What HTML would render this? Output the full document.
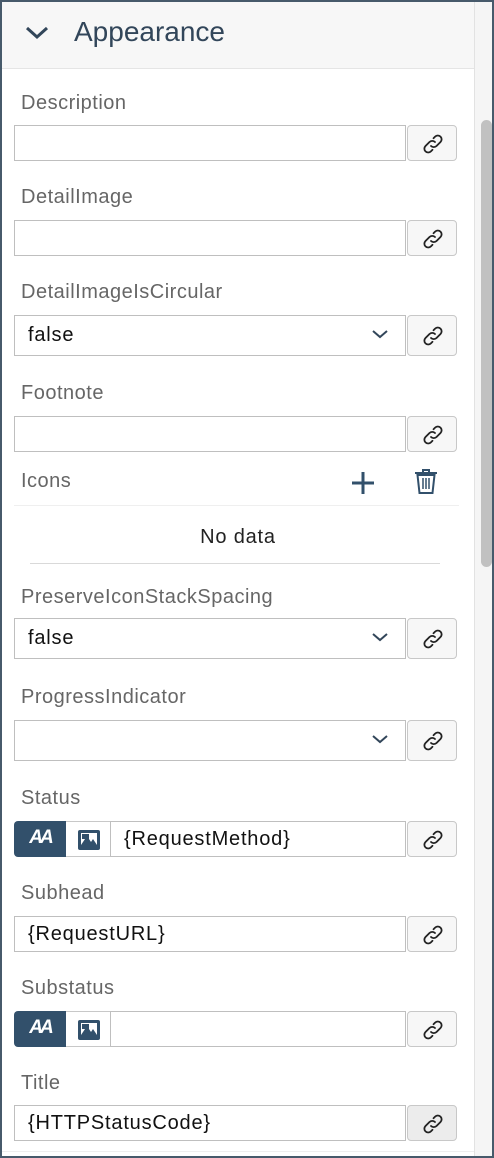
<!DOCTYPE html>
<html><head><meta charset="utf-8"><style>
*{box-sizing:border-box;margin:0;padding:0}
body{width:494px;height:1158px;background:#475a6b;position:relative;overflow:hidden;font-family:"Liberation Sans",sans-serif}
#p{position:absolute;left:2px;top:2px;width:490px;height:1154px;background:#fff;overflow:hidden}
.hdr{position:absolute;left:0;top:0;width:472px;height:67px;background:#f7f7f7;border-bottom:1px solid #e5e5e5}
.ht{position:absolute;left:72px;top:14px;font-size:28px;color:#32465a}
.sb{position:absolute;left:472px;top:0;width:18px;height:1154px;background:#f5f5f5;border-left:1px solid #e2e2e2}
.th{position:absolute;left:479px;top:118px;width:11px;height:447px;background:#c1c1c1;border-radius:6px}
.lb{position:absolute;left:19px;font-size:20px;letter-spacing:0.5px;color:#666}
.in{position:absolute;left:12px;width:392px;height:36px;border:1px solid #bfbfbf;background:#fff;font-size:20px;letter-spacing:0.8px;color:#111;padding:6px 0 0 13px}
.sel{height:41px;padding-top:8px}
.lk{position:absolute;left:405px;width:50px;height:36px;border:1px solid #c8c8c8;border-radius:4px;background:#f7f7f7}
.lk svg{position:absolute;left:13px;top:6px}
.chev{position:absolute;right:16px;top:12px}
.tg1{position:absolute;left:12px;width:52px;height:36px;background:#32506b;border-radius:4px 0 0 4px;color:#fff;font-size:19px;font-weight:bold;font-style:italic;text-align:center;padding-top:6px;letter-spacing:-3px}
.tg2{position:absolute;left:64px;width:45px;height:36px;border:1px solid #c8c8c8;border-left:none;background:#fff}
.tg2 svg{position:absolute;left:11px;top:7px}
.hl{position:absolute;height:1px;background:#e8e8e8}
</style></head><body><div id="p">
<div class="hdr"><svg style="position:absolute;left:22px;top:22px" width="26" height="18" viewBox="0 0 26 18"><path d="M3 4l10 9 10-9" fill="none" stroke="#32465a" stroke-width="3"/></svg><div class="ht">Appearance</div></div>
<div class="sb"></div><div class="th"></div>

<div class="lb" style="top:90px">Description</div>
<div class="in" style="top:123px"></div><div class="lk" style="top:123px"></div>

<div class="lb" style="top:184px">DetailImage</div>
<div class="in" style="top:218px"></div><div class="lk" style="top:218px"></div>

<div class="lb" style="top:279px">DetailImageIsCircular</div>
<div class="in sel" style="top:313px">false<svg class="chev" width="18" height="12" viewBox="0 0 18 12"><path d="M2 3l7 6 7-6" fill="none" stroke="#32465a" stroke-width="2"/></svg></div><div class="lk" style="top:313px;height:41px"></div>

<div class="lb" style="top:380px">Footnote</div>
<div class="in" style="top:414px"></div><div class="lk" style="top:414px"></div>

<div class="lb" style="top:468px">Icons</div>
<svg style="position:absolute;left:348px;top:468px" width="26" height="26" viewBox="0 0 26 26"><path d="M13 2v22M2 13h22" stroke="#32506b" stroke-width="3"/></svg>
<svg style="position:absolute;left:412px;top:467px" width="24" height="26" viewBox="0 0 24 26"><path d="M1 4h22M9 4V1h6v3" fill="none" stroke="#32506b" stroke-width="2"/><path d="M3.5 6l2 18h13l2-18z" fill="none" stroke="#32506b" stroke-width="2"/><path d="M9 9v11M12 9v11M15 9v11" stroke="#32506b" stroke-width="1.5"/></svg>
<div class="hl" style="left:12px;top:503px;width:445px;background:#efefef"></div>
<div style="position:absolute;left:0;width:472px;top:524px;text-align:center;font-size:20px;letter-spacing:0.8px;color:#222">No data</div>
<div class="hl" style="left:28px;top:561px;width:410px;background:#d9d9d9"></div>

<div class="lb" style="top:584px">PreserveIconStackSpacing</div>
<div class="in sel" style="top:616px">false<svg class="chev" width="18" height="12" viewBox="0 0 18 12"><path d="M2 3l7 6 7-6" fill="none" stroke="#32465a" stroke-width="2"/></svg></div><div class="lk" style="top:616px;height:41px"></div>

<div class="lb" style="top:684px">ProgressIndicator</div>
<div class="in sel" style="top:718px"><svg class="chev" width="18" height="12" viewBox="0 0 18 12"><path d="M2 3l7 6 7-6" fill="none" stroke="#32465a" stroke-width="2"/></svg></div><div class="lk" style="top:718px;height:41px"></div>

<div class="lb" style="top:785px">Status</div>
<div class="tg1" style="top:819px">AA</div><div class="tg2" style="top:819px"></div>
<div class="in" style="top:819px;left:108px;width:296px">{RequestMethod}</div><div class="lk" style="top:819px"></div>

<div class="lb" style="top:880px">Subhead</div>
<div class="in" style="top:914px">{RequestURL}</div><div class="lk" style="top:914px"></div>

<div class="lb" style="top:975px">Substatus</div>
<div class="tg1" style="top:1009px">AA</div><div class="tg2" style="top:1009px"></div>
<div class="in" style="top:1009px;left:108px;width:296px"></div><div class="lk" style="top:1009px"></div>

<div class="lb" style="top:1070px">Title</div>
<div class="in" style="top:1103px">{HTTPStatusCode}</div><div class="lk" style="top:1103px;background:#ececec"></div>
<div class="hl" style="left:0;top:1149px;width:472px;background:#eee"></div>
</div>
<script>
var L='<svg width="24" height="24" viewBox="0 0 24 24"><g fill="none" stroke="#222" stroke-width="1.8" stroke-linecap="round"><path d="M10 14a4 4 0 0 0 5.5 0l4-4a3.8 3.8 0 0 0-5.4-5.4l-1.6 1.6"/><path d="M14 10a4 4 0 0 0-5.5 0l-4 4a3.8 3.8 0 0 0 5.4 5.4l1.6-1.6"/></g></svg>';
document.querySelectorAll('.lk').forEach(function(e){e.innerHTML=L;if(e.offsetHeight>38)e.firstChild.style.top='8px'});
var I='<svg width="24" height="22" viewBox="0 0 24 22"><rect x="1" y="1" width="22" height="20" rx="2" fill="#32506b"/><rect x="4" y="4" width="16" height="12" fill="#fff"/><path d="M4 16l6-9 4 6 2-3 4 6z" fill="#32506b"/><rect x="5" y="5" width="7" height="5" fill="#32506b"/></svg>';
document.querySelectorAll('.tg2').forEach(function(e){e.innerHTML=I});
</script>
</body></html>
